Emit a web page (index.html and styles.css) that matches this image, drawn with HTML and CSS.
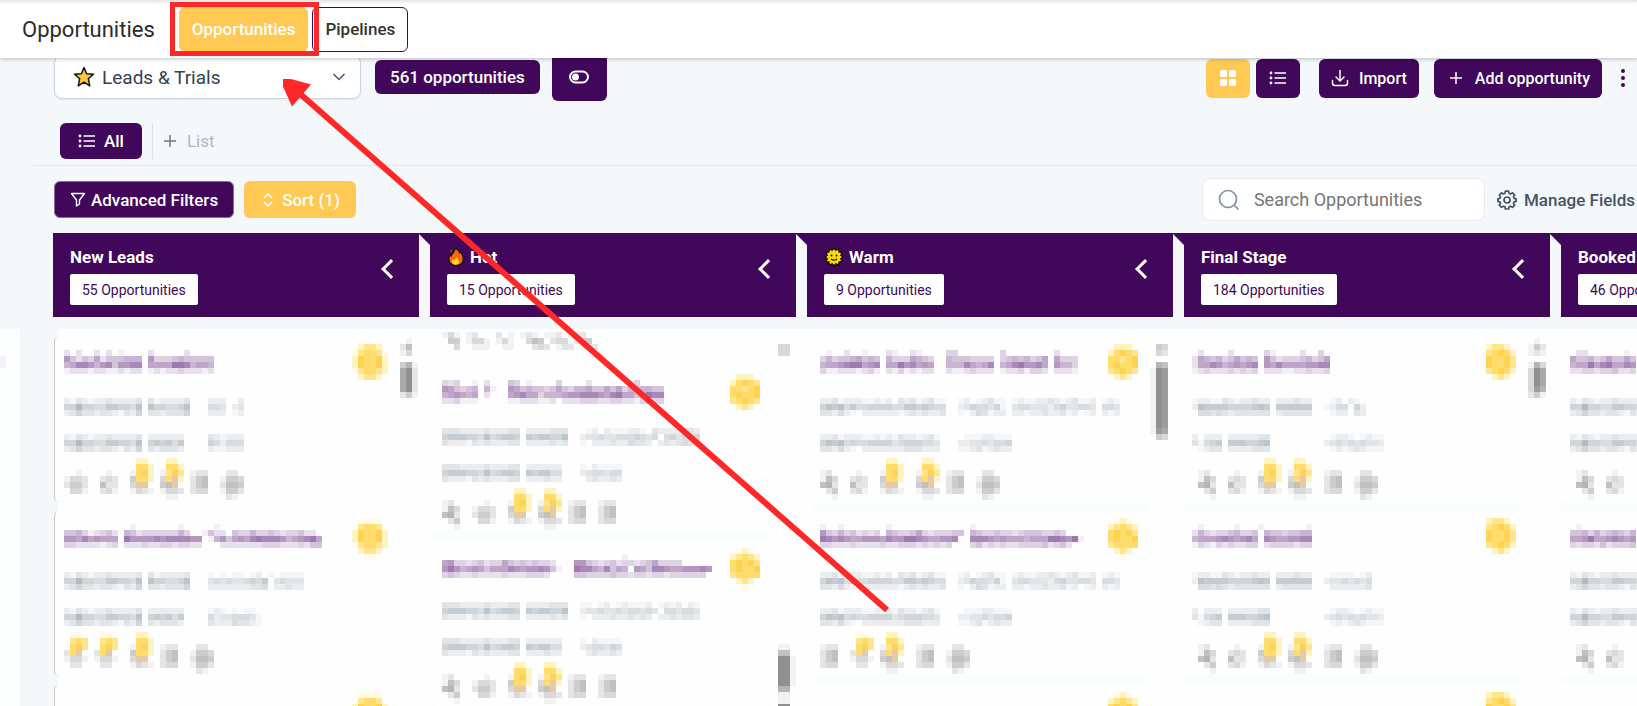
FILE: index.html
```html
<!DOCTYPE html>
<html lang="en">
<head>
<meta charset="utf-8">
<title>Opportunities</title>
<link rel="stylesheet" href="styles.css">
</head>
<body>
<header class="navbar">
  <h1 class="navbar-title">Opportunities</h1>
  <nav class="navbar-tabs">
    <a class="nav-tab nav-tab-active" href="#opportunities">Opportunities<span class="callout"></span></a>
    <a class="nav-tab" href="#pipelines">Pipelines</a>
  </nav>
</header>

<main class="page">
  <section class="toolbar">
    <label class="pipeline-picker">
      <svg width="22" height="22" viewBox="0 0 22 22" aria-hidden="true"><path d="M11 1.6l2.6 6.1 6.9.5-5.2 4.5 1.5 7.2L11 16.2l-5.8 3.700 1.500-7.200L1.500 8.200l6.900-.5z" fill="#ffc83d" stroke="#111" stroke-width="1.500" stroke-linejoin="round"/></svg>
      <select class="picker-select" aria-label="Pipeline"><option>Leads &amp; Trials</option></select>
      <svg class="picker-arrow" width="14" height="10" viewBox="0 0 14 10" aria-hidden="true"><path d="M1.500 2L7 7.500 12.500 2" fill="none" stroke="#475467" stroke-width="1.500"/></svg>
    </label>
    <button class="btn count-btn">561 opportunities</button>
    <button class="btn toggle-btn" aria-label="Toggle view">
      <svg width="20" height="14" viewBox="0 0 20 14"><rect x="1" y="1.500" width="18" height="11" rx="5.500" fill="none" stroke="#fff" stroke-width="2"/><circle cx="6.500" cy="7" r="3.500" fill="#fff"/></svg>
    </button>
    <div class="toolbar-actions">
      <button class="btn icon-btn btn-yellow" aria-label="Board view"><svg width="18" height="18" viewBox="0 0 18 18" fill="#fff"><rect x="1" y="1" width="7" height="7" rx="1.500"/><rect x="10" y="1" width="7" height="7" rx="1.500"/><rect x="1" y="10" width="7" height="7" rx="1.500"/><rect x="10" y="10" width="7" height="7" rx="1.500"/></svg></button>
      <button class="btn icon-btn" aria-label="List view"><svg width="18" height="14" viewBox="0 0 18 14" fill="#fff"><circle cx="2" cy="2" r="1.400"/><circle cx="2" cy="7" r="1.400"/><circle cx="2" cy="12" r="1.400"/><path d="M5.500 2H17M5.500 7H17M5.500 12H17" stroke="#fff" stroke-width="1.400"/></svg></button>
      <button class="btn import-btn"><svg width="18" height="18" viewBox="0 0 18 18" fill="none" stroke="#fff" stroke-width="1.500" stroke-linecap="round" stroke-linejoin="round"><path d="M9 1.500v10M5 8l4 4 4-4M1.500 11.500V14A2.500 2.500 0 0 0 4 16.500h10a2.500 2.500 0 0 0 2.500-2.500v-2.500"/></svg>Import</button>
      <button class="btn add-btn"><svg width="14" height="14" viewBox="0 0 14 14"><path d="M7 1v12M1 7h12" stroke="#fff" stroke-width="1.500"/></svg>Add opportunity</button>
      <button class="more-btn" aria-label="More"><svg width="6" height="20" viewBox="0 0 6 20" fill="#41075b"><circle cx="3" cy="3" r="2"/><circle cx="3" cy="10" r="2"/><circle cx="3" cy="17" r="2"/></svg></button>
    </div>
  </section>

  <section class="views">
    <button class="btn view-btn"><svg width="18" height="14" viewBox="0 0 18 14" fill="#fff"><circle cx="2" cy="2" r="1.400"/><circle cx="2" cy="7" r="1.400"/><circle cx="2" cy="12" r="1.400"/><path d="M5.500 2H17M5.500 7H17M5.500 12H17" stroke="#fff" stroke-width="1.400"/></svg>All</button>
    <button class="add-list"><svg width="14" height="14" viewBox="0 0 14 14"><path d="M7 1v12M1 7h12" stroke="#777" stroke-width="1.500"/></svg>List</button>
  </section>

  <section class="filters">
    <button class="btn filter-btn"><svg width="16" height="16" viewBox="0 0 16 16"><path d="M1.500 1.500h13L9.500 8v4L6.500 14V8z" fill="none" stroke="#fff" stroke-width="1.400" stroke-linejoin="round"/></svg>Advanced Filters</button>
    <button class="btn btn-yellow sort-btn"><svg width="10" height="14" viewBox="0 0 10 14"><path d="M1 5l4-4 4 4M1 9l4 4 4-4" fill="none" stroke="#fff" stroke-width="1.600"/></svg>Sort (1)</button>
    <label class="search">
      <svg width="22" height="22" viewBox="0 0 22 22" fill="none" stroke="#8590a0" stroke-width="1.700"><circle cx="10" cy="10" r="8.500"/><path d="M16 16l4.500 4.500"/></svg>
      <input type="search" placeholder="Search Opportunities" aria-label="Search Opportunities">
    </label>
    <button class="manage-btn"><svg width="20" height="20" viewBox="0 0 20 20" fill="none" stroke="#475467" stroke-width="1.700" stroke-linejoin="round"><circle cx="10" cy="10" r="3"/><path d="M8.400 1.200h3.200l.5 2.200 1.500.6 1.900-1.200 2.200 2.200-1.200 1.900.6 1.500 2.100.5v2.400l-2.100.5-.6 1.500 1.200 1.900-2.200 2.200-1.900-1.200-1.500.6-.5 2.200H8.400l-.5-2.200-1.500-.6-1.900 1.200-2.200-2.200 1.200-1.900-.6-1.500-2.100-.5V8.900l2.100-.5.6-1.500-1.200-1.900 2.200-2.200 1.900 1.200 1.500-.6z"/></svg>Manage Fields</button>
  </section>

  <section class="stages">
    <div class="stage"><div><h2>New Leads</h2><span class="stage-count">55 Opportunities</span></div><button class="collapse" aria-label="Collapse New Leads"></button></div>
    <div class="stage"><div><h2><svg width="18" height="20" viewBox="0 0 18 20" aria-hidden="true"><path d="M8 1c4 1 4 4 5 5 1-.5 1-1 1-1 3 5 3 8 1 11-2 3-9 3.500-12 0-2-3-1-7 0-8l1 1c1-3 4-4 4-8z" fill="#ff6418" stroke="#111" stroke-width="1.300"/><path d="M9 9.500c0 2 4 3 3 6-1 3-6 3-7 0-.5-2 .5-3 1-3.500l1 1.500c1.500-1 2-2 2-4z" fill="#ffd91f"/><circle cx="4" cy="4" r="1.300" fill="#ff6418" stroke="#111" stroke-width=".8"/></svg>Hot</h2><span class="stage-count">15 Opportunities</span></div><button class="collapse" aria-label="Collapse Hot"></button></div>
    <div class="stage"><div><h2><svg width="20" height="20" viewBox="0 0 20 20" aria-hidden="true"><path d="M10 1l1.800 2.200L14.500 2l.6 2.900 2.900.6-1.200 2.700L19 10l-2.200 1.800 1.200 2.700-2.900.6-.6 2.900-2.700-1.200L10 19l-1.800-2.200L5.500 18l-.6-2.900-2.900-.6 1.200-2.700L1 10l2.200-1.800L2 5.500l2.900-.6L5.500 2l2.700 1.200z" fill="#ffd800" stroke="#111" stroke-width="1.300"/><circle cx="7.500" cy="8.500" r="1" fill="#111"/><circle cx="12.500" cy="8.500" r="1" fill="#111"/><path d="M7 12q3 2.500 6 0" fill="none" stroke="#111" stroke-width="1.200"/></svg>Warm</h2><span class="stage-count">9 Opportunities</span></div><button class="collapse" aria-label="Collapse Warm"></button></div>
    <div class="stage"><div><h2>Final Stage</h2><span class="stage-count">184 Opportunities</span></div><button class="collapse" aria-label="Collapse Final Stage"></button></div>
    <div class="stage"><div><h2>Booked</h2><span class="stage-count">46 Opportunities</span></div><button class="collapse" aria-label="Collapse Booked"></button></div>
  </section>

  <section class="board">
    <div class="board-edge" id="edge"></div>
    <div class="lanes" id="lanes"></div>
  </section>
</main>

<svg class="arrow" width="900" height="620" viewBox="0 0 900 620" aria-hidden="true"><path d="M298 92L887 610" stroke="#ff2828" stroke-width="6"/><path d="M283 79h8l20 5.500L292 106.500l-9-20z" fill="#ff2828"/></svg>
<script src="board.js"></script>
</body>
</html>
```
FILE: styles.css
```css
* { box-sizing: border-box; }
html, body { height: 100%; }
body {
  margin: 0;
  display: flex;
  flex-direction: column;
  overflow: hidden;
  position: relative;
  background: #f4f8fb;
  font-family: Roboto, "Liberation Sans", sans-serif;
  font-size: 17px;
  color: #344054;
}
button, input, select { font: inherit; color: inherit; }
button { cursor: pointer; }
svg { flex: none; display: block; }

.navbar {
  position: relative;
  z-index: 2;
  display: flex;
  align-items: center;
  gap: 24px;
  height: 58px;
  flex: none;
  padding: 0 22px;
  background: linear-gradient(#e4e4e4, #fff 4px);
  box-shadow: 0 1px 4px rgba(0, 0, 0, .25);
}
.navbar-title { margin: 0; font-size: 22px; font-weight: 400; color: #2b2b2b; }
.navbar-tabs { display: flex; gap: 4px; }
.nav-tab {
  height: 45px;
  display: flex;
  align-items: center;
  padding: 0 12px;
  border: 1px solid #41075b;
  border-radius: 6px;
  font-weight: 500;
  color: #333;
  text-decoration: none;
}
.nav-tab-active {
  position: relative;
  background: #ffc954;
  border-color: #ffc954;
  color: #fff;
}
.callout {
  position: absolute;
  inset: -6px -12px -5px -10px;
  border: 5px solid #ff2828;
  z-index: 3;
}

.page { flex: 1; min-height: 0; display: flex; flex-direction: column; margin-top: -5px; }
.btn {
  display: flex;
  align-items: center;
  justify-content: center;
  border: 0;
  border-radius: 6px;
  background: #41075b;
  color: #fff;
  font-weight: 500;
  white-space: nowrap;
  padding: 0 15px;
}
.btn-yellow { background: #ffc954; }

.toolbar { display: flex; align-items: center; height: 48px; padding: 0 2px 0 54px; flex: none; }
.pipeline-picker {
  display: flex;
  align-items: center;
  width: 307px;
  height: 44px;
  padding: 0 14px 0 18px;
  margin-right: 14px;
  background: #fff;
  border: 1px solid #cfd2df;
  border-radius: 8px;
  box-shadow: 0 1px 2px rgba(16, 24, 40, .08);
}
.picker-select { flex: 1; appearance: none; border: 0; background: none; padding: 0 7px; font-size: 19px; outline: 0; }
.count-btn { height: 34px; margin-right: 12px; }
.toggle-btn { width: 55px; height: 48px; }
.toolbar-actions { display: flex; align-items: center; margin-left: auto; padding-top: 2px; }
.toolbar-actions .btn { height: 39px; font-size: 16px; }
.toolbar-actions .icon-btn { width: 44px; padding: 0; margin-right: 6px; }
.toolbar-actions .import-btn { gap: 10px; padding: 0 12px; margin: 0 15px 0 13px; }
.toolbar-actions .add-btn { gap: 12px; padding: 0 12px 0 15px; }
.more-btn { border: 0; background: none; padding: 0; width: 25px; margin-left: 8px; display: flex; justify-content: center; }

.views {
  display: flex;
  gap: 10px;
  margin-left: 33px;
  padding: 22px 0 6px 27px;
  border-bottom: 1px solid #e4e8ee;
}
.view-btn { height: 36px; gap: 8px; padding: 0 18px; }
.add-list {
  display: flex;
  align-items: center;
  gap: 10px;
  height: 36px;
  padding: 0 10px;
  border: 0;
  border-left: 1px solid #dfe3e8;
  background: none;
  color: #b3b5c4;
}

.filters { display: flex; align-items: center; gap: 10px; padding: 12px 0 12px 54px; }
.filter-btn { height: 37px; gap: 5px; border: 1px solid #8a6b99; }
.sort-btn { height: 37px; gap: 9px; padding: 0 16px 0 19px; }
.search {
  display: flex;
  align-items: center;
  gap: 14px;
  width: 283px;
  height: 43px;
  margin-left: auto;
  padding: 0 15px;
  background: #fff;
  border: 1px solid #e8ebf1;
  border-radius: 8px;
}
.search input { flex: 1; min-width: 0; border: 0; outline: 0; padding: 0; background: none; font-size: 18px; }
.search input::placeholder { color: #757575; opacity: 1; }
.manage-btn {
  display: flex;
  align-items: center;
  gap: 7px;
  border: 0;
  padding: 0 2px;
  background: none;
  color: #475467;
  font-weight: 500;
  white-space: nowrap;
}

.stages {
  display: grid;
  grid-auto-flow: column;
  grid-auto-columns: 366px;
  column-gap: 11px;
  height: 84px;
  flex: none;
  margin-left: 53px;
  overflow: hidden;
  background: #41075b;
}
.stage {
  position: relative;
  display: flex;
  justify-content: space-between;
  padding: 14px 23px 0 17px;
  color: #fff;
}
.stage::after {
  content: "";
  position: absolute;
  top: 1px;
  bottom: 0;
  left: 100%;
  width: 11px;
  background: #f4f8fb;
  clip-path: polygon(0 0, 100% 11px, 100% 100%, 0 100%);
}
.stage h2 { display: flex; align-items: center; gap: 5px; height: 20px; margin: 0 0 7px; font-size: 17px; font-weight: 700; }
.stage-count {
  display: inline-flex;
  align-items: center;
  height: 31px;
  padding: 0 12px;
  background: #fff;
  border-radius: 2px;
  color: #41075b;
  font-size: 14px;
}
.collapse { width: 20px; height: 20px; margin-top: 11px; border: 0; background: none; padding: 4px; }
.collapse::before {
  content: "";
  display: block;
  width: 11px;
  height: 11px;
  margin-left: 4px;
  border-left: 3px solid #fff;
  border-bottom: 3px solid #fff;
  transform: rotate(45deg);
}

.board { flex: 1; min-height: 0; display: flex; gap: 34px; padding-top: 12px; overflow: hidden; }
.board-edge { width: 20px; flex: none; padding-top: 27px; background: #fdfefe; }
.lanes {
  flex: 1;
  min-width: 0;
  display: grid;
  grid-template-columns: 378px 378px 372px 378px 378px;
  overflow: hidden;
  background: linear-gradient(90deg, transparent 4px, #fefefe 4px);
}
.lane { display: grid; grid-template-columns: 340px 24px; align-items: start; }
.cards { display: grid; gap: 9px; padding-top: 8px; }
.cards-scrolled { padding-top: 3px; }
.cards-scrolled .icons-rest { margin: 0 0 8px 10px; }
.card {
  padding: 7px 0 2px 9px;
  border-left: 1px solid transparent;
  border-radius: 5px;
  box-shadow: 0 9px 0 #fafdfe;
}
.lane:first-child .card { border-color: #c4c6c8; background: #fefefe; box-shadow: none; }
.card-head { display: flex; height: 42px; margin-bottom: 12px; }
.card-head svg:first-child { margin-top: 6px; }
.card-line { margin-bottom: 18px; }
.card-line-last { margin-bottom: 6px; }
.scroll { margin-top: 9px; }

.arrow { position: absolute; left: 0; top: 0; z-index: 4; pointer-events: none; }
```
FILE: board.js
```javascript
// Card contents are masked: each line is a mosaic of 6px cells.
// Digits give the strength of the base colour, letters a-e the yellow tones, t is tan.
const CELL = 6;
const PURPLE = [158, 122, 176], SLATE = [168, 180, 187], GREY = [144, 144, 144];
const YELLOW = { a: '#fffbe6', b: '#fff3c0', c: '#ffe68e', d: '#ffdc6c', e: '#ffd352', t: '#e4cba4' };

function mosaic(text, base, cols, cls) {
  const rows = text.split('|');
  let out = '';
  rows.forEach((row, y) => [...row].forEach((ch, x) => {
    if (ch === '.') return;
    const fill = YELLOW[ch] || `rgba(${base},${ch / 9})`;
    out += `<rect x="${x * CELL}" y="${y * CELL}" width="${CELL}" height="${CELL}" fill="${fill}"/>`;
  }));
  const w = cols * CELL, h = rows.length * CELL;
  return `<svg class="${cls || ''}" width="${w}" height="${h}" viewBox="0 0 ${w} ${h}" shape-rendering="crispEdges">${out}</svg>`;
}

// Action icons, seven cells high; y and z carry a yellow badge.
const SPRITES = {
  p: '...|...|12.|153|562|.24|..1',
  q: '...|...|.1.|232|522|231|...',
  o: '....|....|..1.|1332|2442|.331|....',
  y: '.bb.|.ddb|1deb|4ddb|3tt.|1321|....',
  z: '.bb.|.ddb|1cec|3dtb|45t.|1332|.11.',
  r: '...|...|122|245|245|233|...',
  s: '....|....|.22.|1443|2554|1442|.21.',
  b: '.aa.|.cdc|.dec|2dt.|1331|.22.|....',
};
function icons(spec) {
  const grid = Array.from({ length: 7 }, () => Array(32).fill('.'));
  spec.split(' ').forEach(item => {
    const col = +item.slice(1);
    SPRITES[item[0]].split('|').forEach((row, y) => [...row].forEach((ch, x) => { if (ch !== '.') grid[y][col + x] = ch; }));
  });
  return mosaic(grid.map(r => r.join('')).join('|'), GREY, 55);
}

const SUN6 = '.aaaa.|.cddc.|beddeb|beddeb|acddcb|.bccb.|..aa..';
const SUN6_FIRST = '.bccb.|acddca|beddeb|beddeb|acddcb|.bccb.|......';
const SUN5 = '.bbb.|bdedc|ddcde|dedde|cdedc|.bcb.|.....';
const SUN5_LOW = '.aba.|bcdcb|dedec|dedde|cdddd|.bcb.|..a..';
const SUN_R = '.bccb.|.cdedb|.eddec|.eddec|.cdedb|..bcb.|......';

const card = (title, a, b, icon, sun) => `<article class="card"><div class="card-head">${mosaic(title, PURPLE, 48)}${mosaic(sun, GREY, 7)}</div>`
  + mosaic(a, SLATE, 55, 'card-line') + mosaic(b, SLATE, 55, 'card-line-last') + icons(icon) + '</article>';

const join = (k, v, at) => k.map((r, i) => r.padEnd(at, '.') + v[i]).join('|');
const L1 = v => join(['2132122322223.3122223', '5585544665547.7554457', '2353323321325.3323335'], v, 24);
const L1B = v => join(['2132122322223.222222', '5585544665547.565646', '2353323321325.323332'], v, 24);
const L2 = v => join(['3332222322233.2222333', '5666554745665.6566557', '3222132322233.2222323'], v, 23);
const L2B = v => join(['3332222322233.222222', '5666554745665.656644', '3222132322233.222322'], v, 23);
const L3 = v => join(['223122211212.32312311', '576746445555446656544', '332421.22222212323223'], v, 23);
const L3B = v => join(['22312221121213221231', '57674544555534555443', '332421.2222222333222'], v, 23);
const L4 = v => join(['1221132122322.222322', '2766665555676.666666', '.443432333333.233333'], v, 22);
const L4B = v => join(['2.222.2222233', '31456.6665567', '.1233.2222333'], v, 22);
const V3 = ['12.12311.12112232123112.121', '2354435..3443332453443.443', '1.243122.22122322312.12.212'];
const V3B = ['.11122111', '223343445', '112312322'];
const V4B = ['.1221.1211', '2343434332', '.121232111'];
V3[1] = '23544351.34433324533443.443';
const NONE = ['', '', ''];

const lanes = [
  {
    bar: '..1.|.25.|.13.|....|.461|.792|.792|.792|.792|.241',
    cards: [
      card('2.2..2.2.1....2.....2....|7424362444555.73334544444|5688757847788.66669985665|1222122112122.12122322212', L1(['222..2', '443.23', '222.12']), L1B(['321222', '542444', '211222']), 'o0 q6 y11 z16 r21 s26', SUN6_FIRST),
      card('...........1.......1.....1.................|445312342.54233333353..1422.43353343233422.|776867666.9777787888877.1574676898887567896|332222123.2223223323322...22222223332223244', L1(['1.1.11.12.1.1111', '3434334546.34333', '2222222334.22322']), L1B(['121.1.11.', '423344431', '322243321']), 'b0 b5 y11 r16 s21', SUN6),
      card('.|.|.|.', L1(NONE), L1B(NONE), 'o0 q6', SUN6),
    ],
  },
  {
    bar: '....|.33.|.33.|' + '....|'.repeat(48) + '.11.|.55.|.991|.991|.991|.991|.991|.66.|.11.|.11.|.99.',
    rest: '131.12...2.1.121.112.112|.44.1331.131..354.233.244|..3..111..11...232.122.122',
    cards: [
      card('323..1.2...43.1....3....2.......3....|764345.51..76454434643556446463545544|567656.2...67866355567788876896646988.|223111.....11222112.22233322332213333.', L2(['.12.2111221.32222332', '2334334445434.453445', '1.2223224332.2323432']), L2B(['1.21111', '2344344', '.232232']), 'p0 o5 y11 z16 r21 r26', SUN5),
      card('..............................1......|6733234233643434332...774323423323463333|79756764666876778741..988658465.7648876677787|343223222232223332....4433334332332332333333', L2(['11.12.121112.1212.21', '2334334344343.443443', '1.2223223232.2232332']), L2B(['1.21111', '2344354', '.232232']), 'p0 o5 y11 z16 r21 r26', SUN5_LOW),
    ],
  },
  {
    bar: '....|.43.|.32.|....|.65.|' + '198.|'.repeat(10) + '187.|.43.',
    cards: [
      card('.1..2..1...21..21....33.......3........2...|3534456454.53336543..54443333.34545346.6333|5667899678.66978676..55586568.56897786.7553|3112221231.21312122..21123222.12231332.2221', L3(V3), L3B(V3B), 'p0 q5 y10 z16 r21 s26', SUN5),
      card('1..1.......1.............1................|7435342323.5433463233344.5433433234443343.|98787667776877998766778..8887676665666998791|3322232222322333232323...34232322333342342.', L3(V3), L3B(V3B), 'r0 b5 z10 r16 s21', SUN5_LOW),
      card('.|.|.|.', L3(NONE), L3B(NONE), 'r0', SUN5_LOW),
    ],
  },
  {
    bar: '..1.|.142|.121|....|.163|.397|.397|.397|.386|.041'.replace('0', '2'),
    cards: [
      card('.2....2.....31....2..3.|26545346454.74233345346|26687567678.76866667788|12322232323.22211223223', L4(['.12.21.', '1244.52', '.122.32']), L4B(V4B), 'p1 q6 y11 z16 r22 s27', SUN_R),
      card('.1.....1...1.......1|25323345334.54434455|56667876786.87667788|13213232233.23333233', L4(['.1111.12', '23343434', '.2222223']), L4B(V4B), 'p1 q6 y11 z16 r22 s27', SUN_R),
      card('.|.|.|.', L4(NONE), L4B(NONE), 'p1', SUN_R),
    ],
  },
  {
    bar: '....',
    cards: [
      card('.22......1.|64453464464|56696896687|22332334223', L1(NONE), L1B(NONE), 'p1 q6', SUN_R),
      card('.1.........|44535345435|66796678767|32332423334', L1(NONE), L1B(NONE), 'p1 q6', SUN_R),
    ],
  },
];

document.getElementById('edge').innerHTML = mosaic('1|1', [170, 140, 235], 1);
document.getElementById('lanes').innerHTML = lanes.map(lane =>
  `<div class="lane"><div class="cards${lane.rest ? ' cards-scrolled' : ''}">`
  + (lane.rest ? mosaic(lane.rest, GREY, 55, 'icons-rest') : '')
  + lane.cards.join('') + `</div>${mosaic(lane.bar, GREY, 4, 'scroll')}</div>`).join('');
```
